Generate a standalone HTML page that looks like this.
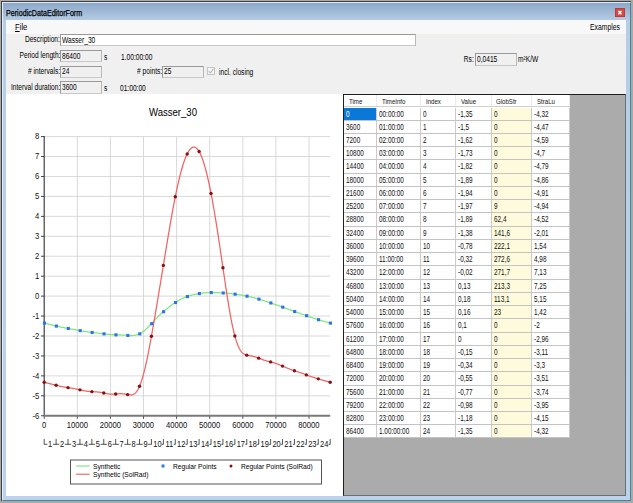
<!DOCTYPE html>
<html><head><meta charset="utf-8">
<style>
*{box-sizing:border-box}
html,body{margin:0;padding:0}
body{width:633px;height:503px;position:relative;overflow:hidden;background:#a9a9a9;font-family:"Liberation Sans",sans-serif;color:#1a1a1a}
.abs{position:absolute}
.t{position:absolute;font-size:8.5px;white-space:nowrap;line-height:1;color:#000;transform:scaleX(0.78);transform-origin:0 0}
#frame{left:1px;top:1px;width:630px;height:500px;background:#404040}
#blue{left:2px;top:2px;width:629px;height:499px;background:linear-gradient(#8eaacb 1px,#b6cde6 18px,#bcd2ec);border-top:1px solid #dce8f4;border-left:1px solid #e0ecf8;border-right:1px solid #3a8a9c;border-bottom:1px solid #3a8a9c}
#title{left:6px;top:8.7px;font-size:8.5px;transform:scaleX(0.84);color:#000;-webkit-text-stroke:0.25px #000}
#close{left:615px;top:8px;width:9.6px;height:9.3px;background:#d24c4a;border:1px solid #c43834}
#close span{position:absolute;left:2px;top:-1px;color:#fff;font-size:8px;font-weight:bold;line-height:9px}
#menu{left:6px;top:20px;width:620px;height:14px;background:#f8f8f8}
#panel{left:6px;top:34px;width:620px;height:60px;background:#f0f0f0}
.tb{position:absolute;border:1px solid #9a9a9a;border-bottom-color:#c8c8c8;border-right-color:#b8b8b8;background:#f0f0f0}
#chart{left:6px;top:94px;width:337px;height:402px;background:#fff}
#gridbg{left:343px;top:94px;width:283px;height:402px;background:#ababab;border-left:1px solid #1e1e1e;border-top:1px solid #1e1e1e;border-right:1px solid #66717c;border-bottom:1px solid #66717c}
#grid{left:344px;top:95px;width:226px;height:342px;background:#fff}
.row{position:absolute;left:0;width:226px;height:13.24px;border-bottom:1px solid #c4c4c4}
.c{position:absolute;top:0;height:100%;border-right:1px solid #cbcbcb;font-size:8.2px;line-height:13.6px;padding-left:1.6px;white-space:nowrap;color:#111}
.yl{background:#fefbdc}
.tx{display:inline-block;transform:scaleX(0.78);transform-origin:0 0}
.sel{background:#0a78d6;color:#fff}
.hdr{position:absolute;left:0;top:0;width:226px;height:12px;border-bottom:1px solid #d0d0d0}
.h{position:absolute;top:0;height:100%;border-right:1px solid #ebebeb;font-size:7.8px;line-height:14.4px;white-space:nowrap;color:#111}
.lg{font-size:8px;transform:scaleX(0.83)}
svg text{font-family:"Liberation Sans",sans-serif}
.ax{font-size:8.5px;fill:#111}
.cl{font-size:8.8px;fill:#111}
</style></head><body>
<div class="abs" id="frame"></div>
<div class="abs" id="blue"></div>
<div class="t" id="title">PeriodicDataEditorForm</div>
<div class="abs" id="close"></div><svg class="abs" style="left:612px;top:5px" width="16" height="16"><path d="M6.4,6 L9.4,9.2 M9.4,6 L6.4,9.2" stroke="#fff" stroke-width="1.4"/></svg>
<div class="abs" id="menu"></div>
<div class="t" style="left:15px;top:23px;font-size:8.5px;transform:scaleX(0.9)"><u>F</u>ile</div>
<div class="t" style="left:589.5px;top:23px;font-size:8.5px;transform:scaleX(0.8)">Examples</div>
<div class="abs" id="panel"></div>
<div class="tb" style="left:60px;top:34px;width:356px;height:12px;background:#fff"></div>
<div class="tb" style="left:60px;top:50px;width:42px;height:12px"></div>
<div class="tb" style="left:60px;top:65.5px;width:42px;height:12px"></div>
<div class="tb" style="left:162px;top:65.5px;width:41.5px;height:12px"></div>
<div class="abs" style="left:207px;top:67px;width:8px;height:8px;border:1px solid #c6c6c6;background:#f4f4f4"></div>
<svg class="abs" style="left:207px;top:67px" width="8" height="8"><polyline points="1.6,4.2 3.3,6 6.6,1.8" fill="none" stroke="#bcbcbc" stroke-width="1.1"/></svg>
<div class="tb" style="left:60px;top:81px;width:42px;height:12.5px"></div>
<div class="tb" style="left:475px;top:52.5px;width:42px;height:13px"></div>
<div class="t" style="right:573.20px;top:35.30px;transform-origin:100% 0">Description:</div>
<div class="t" style="right:572.80px;top:51.20px;transform-origin:100% 0">Period length:</div>
<div class="t" style="right:573.00px;top:67.20px;transform-origin:100% 0"># intervals:</div>
<div class="t" style="right:471.20px;top:66.90px;transform-origin:100% 0"># points:</div>
<div class="t" style="right:573.00px;top:82.70px;transform-origin:100% 0">Interval duration:</div>
<div class="t" style="right:159.10px;top:55.10px;transform-origin:100% 0">Rs:</div>
<div class="t" style="left:62.00px;top:35.90px">Wasser_30</div>
<div class="t" style="left:62.00px;top:51.60px">86400</div>
<div class="t" style="left:103.60px;top:52.70px">s</div>
<div class="t" style="left:121.20px;top:52.80px">1.00:00:00</div>
<div class="t" style="left:61.60px;top:67.40px">24</div>
<div class="t" style="left:163.60px;top:67.40px">25</div>
<div class="t" style="left:218.50px;top:68.20px">incl. closing</div>
<div class="t" style="left:61.60px;top:83.30px">3600</div>
<div class="t" style="left:103.60px;top:83.70px">s</div>
<div class="t" style="left:120.40px;top:84.00px">01:00:00</div>
<div class="t" style="left:476.80px;top:55.10px">0,0415</div>
<div class="t" style="left:518.00px;top:55.10px">m&#178;K/W</div>
<div class="abs" id="chart"></div>
<div class="t" style="left:148.6px;top:107.5px;font-size:10px;transform:scaleX(0.955)">Wasser_30</div>
<svg class="abs" style="left:0;top:0" width="633" height="503" viewBox="0 0 633 503">
<line x1="41" y1="415.76" x2="44.2" y2="415.76" stroke="#444" stroke-width="1"/>
<text transform="translate(39.2,418.56) scale(0.9,1)" text-anchor="end" class="ax">-6</text>
<line x1="44.2" y1="395.82" x2="330.2" y2="395.82" stroke="#d9d9d9" stroke-width="1"/>
<line x1="41" y1="395.82" x2="44.2" y2="395.82" stroke="#444" stroke-width="1"/>
<text transform="translate(39.2,398.62) scale(0.9,1)" text-anchor="end" class="ax">-5</text>
<line x1="44.2" y1="375.88" x2="330.2" y2="375.88" stroke="#d9d9d9" stroke-width="1"/>
<line x1="41" y1="375.88" x2="44.2" y2="375.88" stroke="#444" stroke-width="1"/>
<text transform="translate(39.2,378.68) scale(0.9,1)" text-anchor="end" class="ax">-4</text>
<line x1="44.2" y1="355.94" x2="330.2" y2="355.94" stroke="#d9d9d9" stroke-width="1"/>
<line x1="41" y1="355.94" x2="44.2" y2="355.94" stroke="#444" stroke-width="1"/>
<text transform="translate(39.2,358.74) scale(0.9,1)" text-anchor="end" class="ax">-3</text>
<line x1="44.2" y1="336.00" x2="330.2" y2="336.00" stroke="#d9d9d9" stroke-width="1"/>
<line x1="41" y1="336.00" x2="44.2" y2="336.00" stroke="#444" stroke-width="1"/>
<text transform="translate(39.2,338.80) scale(0.9,1)" text-anchor="end" class="ax">-2</text>
<line x1="44.2" y1="316.06" x2="330.2" y2="316.06" stroke="#d9d9d9" stroke-width="1"/>
<line x1="41" y1="316.06" x2="44.2" y2="316.06" stroke="#444" stroke-width="1"/>
<text transform="translate(39.2,318.86) scale(0.9,1)" text-anchor="end" class="ax">-1</text>
<line x1="44.2" y1="296.12" x2="330.2" y2="296.12" stroke="#d9d9d9" stroke-width="1"/>
<line x1="41" y1="296.12" x2="44.2" y2="296.12" stroke="#444" stroke-width="1"/>
<text transform="translate(39.2,298.92) scale(0.9,1)" text-anchor="end" class="ax">0</text>
<line x1="44.2" y1="276.18" x2="330.2" y2="276.18" stroke="#d9d9d9" stroke-width="1"/>
<line x1="41" y1="276.18" x2="44.2" y2="276.18" stroke="#444" stroke-width="1"/>
<text transform="translate(39.2,278.98) scale(0.9,1)" text-anchor="end" class="ax">1</text>
<line x1="44.2" y1="256.24" x2="330.2" y2="256.24" stroke="#d9d9d9" stroke-width="1"/>
<line x1="41" y1="256.24" x2="44.2" y2="256.24" stroke="#444" stroke-width="1"/>
<text transform="translate(39.2,259.04) scale(0.9,1)" text-anchor="end" class="ax">2</text>
<line x1="44.2" y1="236.30" x2="330.2" y2="236.30" stroke="#d9d9d9" stroke-width="1"/>
<line x1="41" y1="236.30" x2="44.2" y2="236.30" stroke="#444" stroke-width="1"/>
<text transform="translate(39.2,239.10) scale(0.9,1)" text-anchor="end" class="ax">3</text>
<line x1="44.2" y1="216.36" x2="330.2" y2="216.36" stroke="#d9d9d9" stroke-width="1"/>
<line x1="41" y1="216.36" x2="44.2" y2="216.36" stroke="#444" stroke-width="1"/>
<text transform="translate(39.2,219.16) scale(0.9,1)" text-anchor="end" class="ax">4</text>
<line x1="44.2" y1="196.42" x2="330.2" y2="196.42" stroke="#d9d9d9" stroke-width="1"/>
<line x1="41" y1="196.42" x2="44.2" y2="196.42" stroke="#444" stroke-width="1"/>
<text transform="translate(39.2,199.22) scale(0.9,1)" text-anchor="end" class="ax">5</text>
<line x1="44.2" y1="176.48" x2="330.2" y2="176.48" stroke="#d9d9d9" stroke-width="1"/>
<line x1="41" y1="176.48" x2="44.2" y2="176.48" stroke="#444" stroke-width="1"/>
<text transform="translate(39.2,179.28) scale(0.9,1)" text-anchor="end" class="ax">6</text>
<line x1="44.2" y1="156.54" x2="330.2" y2="156.54" stroke="#d9d9d9" stroke-width="1"/>
<line x1="41" y1="156.54" x2="44.2" y2="156.54" stroke="#444" stroke-width="1"/>
<text transform="translate(39.2,159.34) scale(0.9,1)" text-anchor="end" class="ax">7</text>
<line x1="44.2" y1="136.60" x2="330.2" y2="136.60" stroke="#d9d9d9" stroke-width="1"/>
<line x1="41" y1="136.60" x2="44.2" y2="136.60" stroke="#444" stroke-width="1"/>
<text transform="translate(39.2,139.40) scale(0.9,1)" text-anchor="end" class="ax">8</text>
<line x1="44.20" y1="415.8" x2="44.20" y2="418.8" stroke="#444" stroke-width="1"/>
<text transform="translate(44.20,428.2) scale(0.9,1)" text-anchor="middle" class="ax">0</text>
<line x1="77.30" y1="136.6" x2="77.30" y2="415.8" stroke="#d9d9d9" stroke-width="1"/>
<line x1="77.30" y1="415.8" x2="77.30" y2="418.8" stroke="#444" stroke-width="1"/>
<text transform="translate(77.30,428.2) scale(0.9,1)" text-anchor="middle" class="ax">10000</text>
<line x1="110.40" y1="136.6" x2="110.40" y2="415.8" stroke="#d9d9d9" stroke-width="1"/>
<line x1="110.40" y1="415.8" x2="110.40" y2="418.8" stroke="#444" stroke-width="1"/>
<text transform="translate(110.40,428.2) scale(0.9,1)" text-anchor="middle" class="ax">20000</text>
<line x1="143.50" y1="136.6" x2="143.50" y2="415.8" stroke="#d9d9d9" stroke-width="1"/>
<line x1="143.50" y1="415.8" x2="143.50" y2="418.8" stroke="#444" stroke-width="1"/>
<text transform="translate(143.50,428.2) scale(0.9,1)" text-anchor="middle" class="ax">30000</text>
<line x1="176.60" y1="136.6" x2="176.60" y2="415.8" stroke="#d9d9d9" stroke-width="1"/>
<line x1="176.60" y1="415.8" x2="176.60" y2="418.8" stroke="#444" stroke-width="1"/>
<text transform="translate(176.60,428.2) scale(0.9,1)" text-anchor="middle" class="ax">40000</text>
<line x1="209.70" y1="136.6" x2="209.70" y2="415.8" stroke="#d9d9d9" stroke-width="1"/>
<line x1="209.70" y1="415.8" x2="209.70" y2="418.8" stroke="#444" stroke-width="1"/>
<text transform="translate(209.70,428.2) scale(0.9,1)" text-anchor="middle" class="ax">50000</text>
<line x1="242.80" y1="136.6" x2="242.80" y2="415.8" stroke="#d9d9d9" stroke-width="1"/>
<line x1="242.80" y1="415.8" x2="242.80" y2="418.8" stroke="#444" stroke-width="1"/>
<text transform="translate(242.80,428.2) scale(0.9,1)" text-anchor="middle" class="ax">60000</text>
<line x1="275.90" y1="136.6" x2="275.90" y2="415.8" stroke="#d9d9d9" stroke-width="1"/>
<line x1="275.90" y1="415.8" x2="275.90" y2="418.8" stroke="#444" stroke-width="1"/>
<text transform="translate(275.90,428.2) scale(0.9,1)" text-anchor="middle" class="ax">70000</text>
<line x1="309.00" y1="136.6" x2="309.00" y2="415.8" stroke="#d9d9d9" stroke-width="1"/>
<line x1="309.00" y1="415.8" x2="309.00" y2="418.8" stroke="#444" stroke-width="1"/>
<text transform="translate(309.00,428.2) scale(0.9,1)" text-anchor="middle" class="ax">80000</text>
<line x1="44.2" y1="136.1" x2="44.2" y2="415.8" stroke="#404040" stroke-width="1.2"/>
<line x1="44.2" y1="415.76" x2="330.2" y2="415.76" stroke="#7a7a7a" stroke-width="2"/>
<line x1="44.20" y1="439" x2="44.20" y2="444.5" stroke="#2a2a2a" stroke-width="0.8"/>
<line x1="56.12" y1="439" x2="56.12" y2="444.5" stroke="#2a2a2a" stroke-width="0.8"/>
<line x1="68.03" y1="439" x2="68.03" y2="444.5" stroke="#2a2a2a" stroke-width="0.8"/>
<line x1="79.95" y1="439" x2="79.95" y2="444.5" stroke="#2a2a2a" stroke-width="0.8"/>
<line x1="91.86" y1="439" x2="91.86" y2="444.5" stroke="#2a2a2a" stroke-width="0.8"/>
<line x1="103.78" y1="439" x2="103.78" y2="444.5" stroke="#2a2a2a" stroke-width="0.8"/>
<line x1="115.70" y1="439" x2="115.70" y2="444.5" stroke="#2a2a2a" stroke-width="0.8"/>
<line x1="127.61" y1="439" x2="127.61" y2="444.5" stroke="#2a2a2a" stroke-width="0.8"/>
<line x1="139.53" y1="439" x2="139.53" y2="444.5" stroke="#2a2a2a" stroke-width="0.8"/>
<line x1="151.44" y1="439" x2="151.44" y2="444.5" stroke="#2a2a2a" stroke-width="0.8"/>
<line x1="163.36" y1="439" x2="163.36" y2="444.5" stroke="#2a2a2a" stroke-width="0.8"/>
<line x1="175.28" y1="439" x2="175.28" y2="444.5" stroke="#2a2a2a" stroke-width="0.8"/>
<line x1="187.19" y1="439" x2="187.19" y2="444.5" stroke="#2a2a2a" stroke-width="0.8"/>
<line x1="199.11" y1="439" x2="199.11" y2="444.5" stroke="#2a2a2a" stroke-width="0.8"/>
<line x1="211.02" y1="439" x2="211.02" y2="444.5" stroke="#2a2a2a" stroke-width="0.8"/>
<line x1="222.94" y1="439" x2="222.94" y2="444.5" stroke="#2a2a2a" stroke-width="0.8"/>
<line x1="234.86" y1="439" x2="234.86" y2="444.5" stroke="#2a2a2a" stroke-width="0.8"/>
<line x1="246.77" y1="439" x2="246.77" y2="444.5" stroke="#2a2a2a" stroke-width="0.8"/>
<line x1="258.69" y1="439" x2="258.69" y2="444.5" stroke="#2a2a2a" stroke-width="0.8"/>
<line x1="270.60" y1="439" x2="270.60" y2="444.5" stroke="#2a2a2a" stroke-width="0.8"/>
<line x1="282.52" y1="439" x2="282.52" y2="444.5" stroke="#2a2a2a" stroke-width="0.8"/>
<line x1="294.44" y1="439" x2="294.44" y2="444.5" stroke="#2a2a2a" stroke-width="0.8"/>
<line x1="306.35" y1="439" x2="306.35" y2="444.5" stroke="#2a2a2a" stroke-width="0.8"/>
<line x1="318.27" y1="439" x2="318.27" y2="444.5" stroke="#2a2a2a" stroke-width="0.8"/>
<line x1="330.18" y1="439" x2="330.18" y2="444.5" stroke="#2a2a2a" stroke-width="0.8"/>
<line x1="44.20" y1="444.3" x2="47.40" y2="444.3" stroke="#2a2a2a" stroke-width="0.8"/>
<line x1="52.92" y1="444.3" x2="56.12" y2="444.3" stroke="#2a2a2a" stroke-width="0.8"/>
<text transform="translate(50.16,447) scale(0.85,1)" text-anchor="middle" class="cl">1</text>
<line x1="56.12" y1="444.3" x2="59.32" y2="444.3" stroke="#2a2a2a" stroke-width="0.8"/>
<line x1="64.83" y1="444.3" x2="68.03" y2="444.3" stroke="#2a2a2a" stroke-width="0.8"/>
<text transform="translate(62.07,447) scale(0.85,1)" text-anchor="middle" class="cl">2</text>
<line x1="68.03" y1="444.3" x2="71.23" y2="444.3" stroke="#2a2a2a" stroke-width="0.8"/>
<line x1="76.75" y1="444.3" x2="79.95" y2="444.3" stroke="#2a2a2a" stroke-width="0.8"/>
<text transform="translate(73.99,447) scale(0.85,1)" text-anchor="middle" class="cl">3</text>
<line x1="79.95" y1="444.3" x2="83.15" y2="444.3" stroke="#2a2a2a" stroke-width="0.8"/>
<line x1="88.66" y1="444.3" x2="91.86" y2="444.3" stroke="#2a2a2a" stroke-width="0.8"/>
<text transform="translate(85.91,447) scale(0.85,1)" text-anchor="middle" class="cl">4</text>
<line x1="91.86" y1="444.3" x2="95.06" y2="444.3" stroke="#2a2a2a" stroke-width="0.8"/>
<line x1="100.58" y1="444.3" x2="103.78" y2="444.3" stroke="#2a2a2a" stroke-width="0.8"/>
<text transform="translate(97.82,447) scale(0.85,1)" text-anchor="middle" class="cl">5</text>
<line x1="103.78" y1="444.3" x2="106.98" y2="444.3" stroke="#2a2a2a" stroke-width="0.8"/>
<line x1="112.50" y1="444.3" x2="115.70" y2="444.3" stroke="#2a2a2a" stroke-width="0.8"/>
<text transform="translate(109.74,447) scale(0.85,1)" text-anchor="middle" class="cl">6</text>
<line x1="115.70" y1="444.3" x2="118.90" y2="444.3" stroke="#2a2a2a" stroke-width="0.8"/>
<line x1="124.41" y1="444.3" x2="127.61" y2="444.3" stroke="#2a2a2a" stroke-width="0.8"/>
<text transform="translate(121.65,447) scale(0.85,1)" text-anchor="middle" class="cl">7</text>
<line x1="127.61" y1="444.3" x2="130.81" y2="444.3" stroke="#2a2a2a" stroke-width="0.8"/>
<line x1="136.33" y1="444.3" x2="139.53" y2="444.3" stroke="#2a2a2a" stroke-width="0.8"/>
<text transform="translate(133.57,447) scale(0.85,1)" text-anchor="middle" class="cl">8</text>
<line x1="139.53" y1="444.3" x2="142.73" y2="444.3" stroke="#2a2a2a" stroke-width="0.8"/>
<line x1="148.24" y1="444.3" x2="151.44" y2="444.3" stroke="#2a2a2a" stroke-width="0.8"/>
<text transform="translate(145.49,447) scale(0.85,1)" text-anchor="middle" class="cl">9</text>
<line x1="161.76" y1="444.3" x2="163.36" y2="444.3" stroke="#2a2a2a" stroke-width="0.8"/>
<text transform="translate(157.40,447) scale(0.85,1)" text-anchor="middle" class="cl">10</text>
<line x1="173.68" y1="444.3" x2="175.28" y2="444.3" stroke="#2a2a2a" stroke-width="0.8"/>
<text transform="translate(169.32,447) scale(0.85,1)" text-anchor="middle" class="cl">11</text>
<line x1="185.59" y1="444.3" x2="187.19" y2="444.3" stroke="#2a2a2a" stroke-width="0.8"/>
<text transform="translate(181.23,447) scale(0.85,1)" text-anchor="middle" class="cl">12</text>
<line x1="197.51" y1="444.3" x2="199.11" y2="444.3" stroke="#2a2a2a" stroke-width="0.8"/>
<text transform="translate(193.15,447) scale(0.85,1)" text-anchor="middle" class="cl">13</text>
<line x1="209.42" y1="444.3" x2="211.02" y2="444.3" stroke="#2a2a2a" stroke-width="0.8"/>
<text transform="translate(205.07,447) scale(0.85,1)" text-anchor="middle" class="cl">14</text>
<line x1="221.34" y1="444.3" x2="222.94" y2="444.3" stroke="#2a2a2a" stroke-width="0.8"/>
<text transform="translate(216.98,447) scale(0.85,1)" text-anchor="middle" class="cl">15</text>
<line x1="233.26" y1="444.3" x2="234.86" y2="444.3" stroke="#2a2a2a" stroke-width="0.8"/>
<text transform="translate(228.90,447) scale(0.85,1)" text-anchor="middle" class="cl">16</text>
<line x1="245.17" y1="444.3" x2="246.77" y2="444.3" stroke="#2a2a2a" stroke-width="0.8"/>
<text transform="translate(240.81,447) scale(0.85,1)" text-anchor="middle" class="cl">17</text>
<line x1="257.09" y1="444.3" x2="258.69" y2="444.3" stroke="#2a2a2a" stroke-width="0.8"/>
<text transform="translate(252.73,447) scale(0.85,1)" text-anchor="middle" class="cl">18</text>
<line x1="269.00" y1="444.3" x2="270.60" y2="444.3" stroke="#2a2a2a" stroke-width="0.8"/>
<text transform="translate(264.65,447) scale(0.85,1)" text-anchor="middle" class="cl">19</text>
<line x1="280.92" y1="444.3" x2="282.52" y2="444.3" stroke="#2a2a2a" stroke-width="0.8"/>
<text transform="translate(276.56,447) scale(0.85,1)" text-anchor="middle" class="cl">20</text>
<line x1="292.84" y1="444.3" x2="294.44" y2="444.3" stroke="#2a2a2a" stroke-width="0.8"/>
<text transform="translate(288.48,447) scale(0.85,1)" text-anchor="middle" class="cl">21</text>
<line x1="304.75" y1="444.3" x2="306.35" y2="444.3" stroke="#2a2a2a" stroke-width="0.8"/>
<text transform="translate(300.39,447) scale(0.85,1)" text-anchor="middle" class="cl">22</text>
<line x1="316.67" y1="444.3" x2="318.27" y2="444.3" stroke="#2a2a2a" stroke-width="0.8"/>
<text transform="translate(312.31,447) scale(0.85,1)" text-anchor="middle" class="cl">23</text>
<line x1="328.58" y1="444.3" x2="330.18" y2="444.3" stroke="#2a2a2a" stroke-width="0.8"/>
<text transform="translate(324.23,447) scale(0.85,1)" text-anchor="middle" class="cl">24</text>
<path d="M44.20,323.04 L44.50,323.12 L44.80,323.19 L45.09,323.27 L45.39,323.35 L45.69,323.43 L45.99,323.50 L46.29,323.58 L46.58,323.66 L46.88,323.73 L47.18,323.81 L47.48,323.89 L47.77,323.96 L48.07,324.04 L48.37,324.11 L48.67,324.19 L48.97,324.27 L49.26,324.34 L49.56,324.42 L49.86,324.49 L50.16,324.57 L50.46,324.64 L50.75,324.72 L51.05,324.79 L51.35,324.87 L51.65,324.94 L51.95,325.02 L52.24,325.09 L52.54,325.17 L52.84,325.24 L53.14,325.31 L53.43,325.39 L53.73,325.46 L54.03,325.53 L54.33,325.60 L54.63,325.68 L54.92,325.75 L55.22,325.82 L55.52,325.89 L55.82,325.96 L56.12,326.03 L56.41,326.10 L56.71,326.17 L57.01,326.24 L57.31,326.31 L57.61,326.37 L57.90,326.44 L58.20,326.51 L58.50,326.57 L58.80,326.64 L59.09,326.70 L59.39,326.77 L59.69,326.83 L59.99,326.89 L60.29,326.96 L60.58,327.02 L60.88,327.08 L61.18,327.14 L61.48,327.20 L61.78,327.26 L62.07,327.32 L62.37,327.38 L62.67,327.44 L62.97,327.50 L63.27,327.55 L63.56,327.61 L63.86,327.67 L64.16,327.72 L64.46,327.78 L64.76,327.83 L65.05,327.89 L65.35,327.94 L65.65,328.00 L65.95,328.05 L66.24,328.10 L66.54,328.16 L66.84,328.21 L67.14,328.26 L67.44,328.32 L67.73,328.37 L68.03,328.42 L68.33,328.48 L68.63,328.53 L68.93,328.58 L69.22,328.63 L69.52,328.69 L69.82,328.74 L70.12,328.79 L70.42,328.84 L70.71,328.90 L71.01,328.95 L71.31,329.00 L71.61,329.06 L71.90,329.11 L72.20,329.16 L72.50,329.22 L72.80,329.27 L73.10,329.33 L73.39,329.38 L73.69,329.44 L73.99,329.49 L74.29,329.55 L74.59,329.60 L74.88,329.66 L75.18,329.71 L75.48,329.77 L75.78,329.83 L76.08,329.88 L76.37,329.94 L76.67,330.00 L76.97,330.05 L77.27,330.11 L77.56,330.17 L77.86,330.22 L78.16,330.28 L78.46,330.34 L78.76,330.39 L79.05,330.45 L79.35,330.50 L79.65,330.56 L79.95,330.62 L80.25,330.67 L80.54,330.73 L80.84,330.78 L81.14,330.84 L81.44,330.89 L81.74,330.94 L82.03,331.00 L82.33,331.05 L82.63,331.10 L82.93,331.16 L83.22,331.21 L83.52,331.26 L83.82,331.31 L84.12,331.36 L84.42,331.41 L84.71,331.45 L85.01,331.50 L85.31,331.55 L85.61,331.59 L85.91,331.64 L86.20,331.68 L86.50,331.73 L86.80,331.77 L87.10,331.81 L87.40,331.86 L87.69,331.90 L87.99,331.94 L88.29,331.98 L88.59,332.02 L88.89,332.05 L89.18,332.09 L89.48,332.13 L89.78,332.17 L90.08,332.20 L90.37,332.24 L90.67,332.27 L90.97,332.31 L91.27,332.34 L91.57,332.38 L91.86,332.41 L92.16,332.44 L92.46,332.48 L92.76,332.51 L93.06,332.54 L93.35,332.58 L93.65,332.61 L93.95,332.64 L94.25,332.67 L94.55,332.71 L94.84,332.74 L95.14,332.77 L95.44,332.80 L95.74,332.84 L96.03,332.87 L96.33,332.90 L96.63,332.94 L96.93,332.97 L97.23,333.00 L97.52,333.04 L97.82,333.07 L98.12,333.11 L98.42,333.14 L98.72,333.18 L99.01,333.21 L99.31,333.25 L99.61,333.28 L99.91,333.32 L100.21,333.36 L100.50,333.39 L100.80,333.43 L101.10,333.47 L101.40,333.51 L101.69,333.54 L101.99,333.58 L102.29,333.62 L102.59,333.66 L102.89,333.69 L103.18,333.73 L103.48,333.77 L103.78,333.81 L104.08,333.84 L104.38,333.88 L104.67,333.92 L104.97,333.95 L105.27,333.99 L105.57,334.03 L105.87,334.06 L106.16,334.10 L106.46,334.13 L106.76,334.17 L107.06,334.20 L107.35,334.23 L107.65,334.26 L107.95,334.29 L108.25,334.32 L108.55,334.35 L108.84,334.38 L109.14,334.41 L109.44,334.44 L109.74,334.46 L110.04,334.49 L110.33,334.51 L110.63,334.54 L110.93,334.56 L111.23,334.58 L111.53,334.60 L111.82,334.62 L112.12,334.64 L112.42,334.66 L112.72,334.67 L113.01,334.69 L113.31,334.70 L113.61,334.72 L113.91,334.73 L114.21,334.75 L114.50,334.76 L114.80,334.77 L115.10,334.78 L115.40,334.79 L115.70,334.80 L115.99,334.81 L116.29,334.82 L116.59,334.83 L116.89,334.84 L117.19,334.85 L117.48,334.86 L117.78,334.87 L118.08,334.88 L118.38,334.89 L118.67,334.90 L118.97,334.91 L119.27,334.92 L119.57,334.93 L119.87,334.94 L120.16,334.95 L120.46,334.96 L120.76,334.97 L121.06,334.99 L121.36,335.00 L121.65,335.02 L121.95,335.03 L122.25,335.05 L122.55,335.06 L122.85,335.08 L123.14,335.10 L123.44,335.11 L123.74,335.13 L124.04,335.15 L124.34,335.17 L124.63,335.19 L124.93,335.21 L125.23,335.23 L125.53,335.25 L125.82,335.28 L126.12,335.30 L126.42,335.32 L126.72,335.34 L127.02,335.36 L127.31,335.38 L127.61,335.40 L127.91,335.42 L128.21,335.44 L128.51,335.46 L128.80,335.47 L129.10,335.49 L129.40,335.50 L129.70,335.52 L130.00,335.53 L130.29,335.54 L130.59,335.54 L130.89,335.55 L131.19,335.55 L131.48,335.55 L131.78,335.54 L132.08,335.54 L132.38,335.53 L132.68,335.51 L132.97,335.49 L133.27,335.47 L133.57,335.45 L133.87,335.42 L134.17,335.38 L134.46,335.34 L134.76,335.30 L135.06,335.25 L135.36,335.19 L135.66,335.13 L135.95,335.07 L136.25,335.00 L136.55,334.92 L136.85,334.84 L137.14,334.75 L137.44,334.65 L137.74,334.55 L138.04,334.44 L138.34,334.33 L138.63,334.21 L138.93,334.08 L139.23,333.95 L139.53,333.81 L139.83,333.66 L140.12,333.50 L140.42,333.34 L140.72,333.18 L141.02,333.00 L141.32,332.82 L141.61,332.63 L141.91,332.44 L142.21,332.24 L142.51,332.03 L142.80,331.82 L143.10,331.60 L143.40,331.38 L143.70,331.14 L144.00,330.91 L144.29,330.67 L144.59,330.42 L144.89,330.16 L145.19,329.91 L145.49,329.64 L145.78,329.37 L146.08,329.10 L146.38,328.82 L146.68,328.54 L146.98,328.26 L147.27,327.97 L147.57,327.67 L147.87,327.38 L148.17,327.08 L148.47,326.78 L148.76,326.47 L149.06,326.16 L149.36,325.85 L149.66,325.54 L149.95,325.23 L150.25,324.91 L150.55,324.59 L150.85,324.28 L151.15,323.96 L151.44,323.64 L151.74,323.32 L152.04,323.00 L152.34,322.67 L152.64,322.35 L152.93,322.03 L153.23,321.71 L153.53,321.39 L153.83,321.07 L154.13,320.75 L154.42,320.43 L154.72,320.12 L155.02,319.80 L155.32,319.48 L155.61,319.17 L155.91,318.86 L156.21,318.55 L156.51,318.24 L156.81,317.93 L157.10,317.63 L157.40,317.32 L157.70,317.02 L158.00,316.72 L158.30,316.42 L158.59,316.13 L158.89,315.83 L159.19,315.54 L159.49,315.25 L159.79,314.96 L160.08,314.68 L160.38,314.40 L160.68,314.11 L160.98,313.83 L161.27,313.56 L161.57,313.28 L161.87,313.01 L162.17,312.74 L162.47,312.47 L162.76,312.20 L163.06,311.94 L163.36,311.67 L163.66,311.41 L163.96,311.15 L164.25,310.89 L164.55,310.64 L164.85,310.38 L165.15,310.13 L165.45,309.88 L165.74,309.63 L166.04,309.38 L166.34,309.14 L166.64,308.89 L166.93,308.65 L167.23,308.41 L167.53,308.17 L167.83,307.93 L168.13,307.70 L168.42,307.46 L168.72,307.23 L169.02,307.00 L169.32,306.77 L169.62,306.54 L169.91,306.31 L170.21,306.08 L170.51,305.86 L170.81,305.64 L171.11,305.42 L171.40,305.20 L171.70,304.98 L172.00,304.76 L172.30,304.55 L172.59,304.33 L172.89,304.12 L173.19,303.91 L173.49,303.71 L173.79,303.50 L174.08,303.30 L174.38,303.09 L174.68,302.89 L174.98,302.70 L175.28,302.50 L175.57,302.31 L175.87,302.11 L176.17,301.92 L176.47,301.74 L176.77,301.55 L177.06,301.37 L177.36,301.19 L177.66,301.01 L177.96,300.83 L178.25,300.66 L178.55,300.49 L178.85,300.32 L179.15,300.15 L179.45,299.98 L179.74,299.82 L180.04,299.66 L180.34,299.50 L180.64,299.35 L180.94,299.19 L181.23,299.04 L181.53,298.90 L181.83,298.75 L182.13,298.61 L182.43,298.47 L182.72,298.33 L183.02,298.19 L183.32,298.06 L183.62,297.93 L183.92,297.80 L184.21,297.67 L184.51,297.55 L184.81,297.42 L185.11,297.30 L185.40,297.18 L185.70,297.07 L186.00,296.95 L186.30,296.84 L186.60,296.73 L186.89,296.62 L187.19,296.52 L187.49,296.41 L187.79,296.31 L188.09,296.21 L188.38,296.11 L188.68,296.02 L188.98,295.92 L189.28,295.83 L189.58,295.74 L189.87,295.65 L190.17,295.56 L190.47,295.47 L190.77,295.39 L191.06,295.30 L191.36,295.22 L191.66,295.14 L191.96,295.06 L192.26,294.98 L192.55,294.90 L192.85,294.83 L193.15,294.75 L193.45,294.68 L193.75,294.61 L194.04,294.54 L194.34,294.47 L194.64,294.40 L194.94,294.34 L195.24,294.27 L195.53,294.21 L195.83,294.14 L196.13,294.08 L196.43,294.02 L196.72,293.96 L197.02,293.90 L197.32,293.85 L197.62,293.79 L197.92,293.73 L198.21,293.68 L198.51,293.63 L198.81,293.58 L199.11,293.53 L199.41,293.48 L199.70,293.43 L200.00,293.39 L200.30,293.34 L200.60,293.30 L200.90,293.25 L201.19,293.21 L201.49,293.17 L201.79,293.13 L202.09,293.10 L202.38,293.06 L202.68,293.02 L202.98,292.99 L203.28,292.96 L203.58,292.93 L203.87,292.90 L204.17,292.87 L204.47,292.84 L204.77,292.81 L205.07,292.79 L205.36,292.77 L205.66,292.74 L205.96,292.72 L206.26,292.70 L206.56,292.68 L206.85,292.67 L207.15,292.65 L207.45,292.63 L207.75,292.62 L208.05,292.61 L208.34,292.59 L208.64,292.58 L208.94,292.57 L209.24,292.56 L209.53,292.56 L209.83,292.55 L210.13,292.54 L210.43,292.54 L210.73,292.53 L211.02,292.53 L211.32,292.53 L211.62,292.53 L211.92,292.53 L212.22,292.53 L212.51,292.53 L212.81,292.53 L213.11,292.53 L213.41,292.54 L213.71,292.54 L214.00,292.54 L214.30,292.55 L214.60,292.56 L214.90,292.56 L215.19,292.57 L215.49,292.58 L215.79,292.58 L216.09,292.59 L216.39,292.60 L216.68,292.61 L216.98,292.62 L217.28,292.63 L217.58,292.65 L217.88,292.66 L218.17,292.67 L218.47,292.68 L218.77,292.70 L219.07,292.71 L219.37,292.72 L219.66,292.74 L219.96,292.75 L220.26,292.77 L220.56,292.79 L220.85,292.80 L221.15,292.82 L221.45,292.84 L221.75,292.85 L222.05,292.87 L222.34,292.89 L222.64,292.91 L222.94,292.93 L223.24,292.95 L223.54,292.97 L223.83,292.99 L224.13,293.01 L224.43,293.03 L224.73,293.06 L225.03,293.08 L225.32,293.10 L225.62,293.13 L225.92,293.15 L226.22,293.18 L226.51,293.20 L226.81,293.23 L227.11,293.25 L227.41,293.28 L227.71,293.31 L228.00,293.34 L228.30,293.37 L228.60,293.39 L228.90,293.42 L229.20,293.45 L229.49,293.48 L229.79,293.52 L230.09,293.55 L230.39,293.58 L230.69,293.61 L230.98,293.65 L231.28,293.68 L231.58,293.71 L231.88,293.75 L232.17,293.78 L232.47,293.82 L232.77,293.86 L233.07,293.89 L233.37,293.93 L233.66,293.97 L233.96,294.01 L234.26,294.05 L234.56,294.09 L234.86,294.13 L235.15,294.17 L235.45,294.21 L235.75,294.25 L236.05,294.29 L236.35,294.33 L236.64,294.38 L236.94,294.42 L237.24,294.46 L237.54,294.51 L237.83,294.55 L238.13,294.60 L238.43,294.64 L238.73,294.69 L239.03,294.73 L239.32,294.78 L239.62,294.83 L239.92,294.88 L240.22,294.92 L240.52,294.97 L240.81,295.02 L241.11,295.07 L241.41,295.12 L241.71,295.17 L242.01,295.22 L242.30,295.28 L242.60,295.33 L242.90,295.38 L243.20,295.43 L243.50,295.49 L243.79,295.54 L244.09,295.60 L244.39,295.65 L244.69,295.71 L244.98,295.77 L245.28,295.82 L245.58,295.88 L245.88,295.94 L246.18,296.00 L246.47,296.06 L246.77,296.12 L247.07,296.18 L247.37,296.24 L247.67,296.31 L247.96,296.37 L248.26,296.43 L248.56,296.50 L248.86,296.56 L249.16,296.63 L249.45,296.70 L249.75,296.76 L250.05,296.83 L250.35,296.90 L250.64,296.97 L250.94,297.04 L251.24,297.11 L251.54,297.18 L251.84,297.25 L252.13,297.33 L252.43,297.40 L252.73,297.48 L253.03,297.55 L253.33,297.63 L253.62,297.70 L253.92,297.78 L254.22,297.86 L254.52,297.94 L254.82,298.02 L255.11,298.10 L255.41,298.18 L255.71,298.26 L256.01,298.34 L256.30,298.43 L256.60,298.51 L256.90,298.59 L257.20,298.68 L257.50,298.76 L257.79,298.85 L258.09,298.94 L258.39,299.02 L258.69,299.11 L258.99,299.20 L259.28,299.29 L259.58,299.38 L259.88,299.47 L260.18,299.56 L260.48,299.65 L260.77,299.74 L261.07,299.83 L261.37,299.92 L261.67,300.01 L261.96,300.10 L262.26,300.20 L262.56,300.29 L262.86,300.38 L263.16,300.48 L263.45,300.57 L263.75,300.66 L264.05,300.76 L264.35,300.85 L264.65,300.95 L264.94,301.04 L265.24,301.14 L265.54,301.23 L265.84,301.33 L266.14,301.43 L266.43,301.52 L266.73,301.62 L267.03,301.72 L267.33,301.82 L267.62,301.91 L267.92,302.01 L268.22,302.11 L268.52,302.21 L268.82,302.30 L269.11,302.40 L269.41,302.50 L269.71,302.60 L270.01,302.70 L270.31,302.80 L270.60,302.90 L270.90,303.00 L271.20,303.10 L271.50,303.20 L271.80,303.30 L272.09,303.40 L272.39,303.50 L272.69,303.60 L272.99,303.71 L273.29,303.81 L273.58,303.91 L273.88,304.01 L274.18,304.11 L274.48,304.22 L274.77,304.32 L275.07,304.42 L275.37,304.53 L275.67,304.63 L275.97,304.73 L276.26,304.84 L276.56,304.94 L276.86,305.05 L277.16,305.15 L277.46,305.26 L277.75,305.36 L278.05,305.47 L278.35,305.58 L278.65,305.68 L278.95,305.79 L279.24,305.90 L279.54,306.00 L279.84,306.11 L280.14,306.22 L280.43,306.33 L280.73,306.43 L281.03,306.54 L281.33,306.65 L281.63,306.76 L281.92,306.87 L282.22,306.98 L282.52,307.09 L282.82,307.20 L283.12,307.31 L283.41,307.42 L283.71,307.53 L284.01,307.64 L284.31,307.75 L284.61,307.86 L284.90,307.97 L285.20,308.08 L285.50,308.19 L285.80,308.30 L286.09,308.41 L286.39,308.52 L286.69,308.63 L286.99,308.74 L287.29,308.85 L287.58,308.96 L287.88,309.07 L288.18,309.18 L288.48,309.29 L288.78,309.40 L289.07,309.51 L289.37,309.62 L289.67,309.73 L289.97,309.84 L290.27,309.95 L290.56,310.06 L290.86,310.17 L291.16,310.28 L291.46,310.39 L291.75,310.50 L292.05,310.61 L292.35,310.72 L292.65,310.82 L292.95,310.93 L293.24,311.04 L293.54,311.15 L293.84,311.26 L294.14,311.37 L294.44,311.47 L294.73,311.58 L295.03,311.69 L295.33,311.80 L295.63,311.90 L295.93,312.01 L296.22,312.12 L296.52,312.22 L296.82,312.33 L297.12,312.44 L297.42,312.54 L297.71,312.65 L298.01,312.75 L298.31,312.86 L298.61,312.96 L298.90,313.07 L299.20,313.17 L299.50,313.28 L299.80,313.38 L300.10,313.49 L300.39,313.59 L300.69,313.70 L300.99,313.80 L301.29,313.90 L301.59,314.01 L301.88,314.11 L302.18,314.22 L302.48,314.32 L302.78,314.42 L303.08,314.53 L303.37,314.63 L303.67,314.73 L303.97,314.84 L304.27,314.94 L304.56,315.04 L304.86,315.15 L305.16,315.25 L305.46,315.35 L305.76,315.46 L306.05,315.56 L306.35,315.66 L306.65,315.76 L306.95,315.87 L307.25,315.97 L307.54,316.07 L307.84,316.17 L308.14,316.28 L308.44,316.38 L308.74,316.48 L309.03,316.58 L309.33,316.69 L309.63,316.79 L309.93,316.89 L310.22,316.99 L310.52,317.09 L310.82,317.19 L311.12,317.30 L311.42,317.40 L311.71,317.50 L312.01,317.60 L312.31,317.70 L312.61,317.80 L312.91,317.90 L313.20,318.00 L313.50,318.10 L313.80,318.20 L314.10,318.30 L314.40,318.40 L314.69,318.49 L314.99,318.59 L315.29,318.69 L315.59,318.79 L315.88,318.89 L316.18,318.98 L316.48,319.08 L316.78,319.18 L317.08,319.27 L317.37,319.37 L317.67,319.46 L317.97,319.56 L318.27,319.65 L318.57,319.74 L318.86,319.84 L319.16,319.93 L319.46,320.02 L319.76,320.11 L320.06,320.20 L320.35,320.29 L320.65,320.38 L320.95,320.47 L321.25,320.56 L321.54,320.65 L321.84,320.74 L322.14,320.83 L322.44,320.91 L322.74,321.00 L323.03,321.09 L323.33,321.17 L323.63,321.26 L323.93,321.34 L324.23,321.43 L324.52,321.51 L324.82,321.60 L325.12,321.68 L325.42,321.76 L325.72,321.84 L326.01,321.93 L326.31,322.01 L326.61,322.09 L326.91,322.17 L327.20,322.25 L327.50,322.33 L327.80,322.41 L328.10,322.49 L328.40,322.57 L328.69,322.65 L328.99,322.73 L329.29,322.80 L329.59,322.88 L329.89,322.96 L330.18,323.04" fill="none" stroke="#7de87d" stroke-width="1.25"/>
<path d="M44.20,382.26 L44.50,382.34 L44.80,382.42 L45.09,382.49 L45.39,382.57 L45.69,382.65 L45.99,382.72 L46.29,382.80 L46.58,382.87 L46.88,382.95 L47.18,383.02 L47.48,383.10 L47.77,383.17 L48.07,383.25 L48.37,383.32 L48.67,383.40 L48.97,383.47 L49.26,383.54 L49.56,383.62 L49.86,383.69 L50.16,383.77 L50.46,383.84 L50.75,383.91 L51.05,383.99 L51.35,384.06 L51.65,384.14 L51.95,384.21 L52.24,384.29 L52.54,384.36 L52.84,384.43 L53.14,384.51 L53.43,384.58 L53.73,384.66 L54.03,384.73 L54.33,384.81 L54.63,384.88 L54.92,384.96 L55.22,385.03 L55.52,385.10 L55.82,385.18 L56.12,385.25 L56.41,385.33 L56.71,385.40 L57.01,385.47 L57.31,385.54 L57.61,385.62 L57.90,385.69 L58.20,385.76 L58.50,385.83 L58.80,385.90 L59.09,385.97 L59.39,386.04 L59.69,386.11 L59.99,386.17 L60.29,386.24 L60.58,386.30 L60.88,386.37 L61.18,386.43 L61.48,386.50 L61.78,386.56 L62.07,386.62 L62.37,386.68 L62.67,386.74 L62.97,386.80 L63.27,386.85 L63.56,386.91 L63.86,386.96 L64.16,387.02 L64.46,387.07 L64.76,387.12 L65.05,387.17 L65.35,387.22 L65.65,387.27 L65.95,387.32 L66.24,387.37 L66.54,387.42 L66.84,387.46 L67.14,387.51 L67.44,387.55 L67.73,387.60 L68.03,387.64 L68.33,387.69 L68.63,387.73 L68.93,387.78 L69.22,387.82 L69.52,387.87 L69.82,387.91 L70.12,387.95 L70.42,388.00 L70.71,388.04 L71.01,388.09 L71.31,388.13 L71.61,388.18 L71.90,388.23 L72.20,388.28 L72.50,388.32 L72.80,388.37 L73.10,388.42 L73.39,388.48 L73.69,388.53 L73.99,388.58 L74.29,388.64 L74.59,388.69 L74.88,388.75 L75.18,388.80 L75.48,388.86 L75.78,388.92 L76.08,388.98 L76.37,389.04 L76.67,389.11 L76.97,389.17 L77.27,389.23 L77.56,389.30 L77.86,389.36 L78.16,389.43 L78.46,389.50 L78.76,389.56 L79.05,389.63 L79.35,389.70 L79.65,389.77 L79.95,389.84 L80.25,389.91 L80.54,389.98 L80.84,390.04 L81.14,390.11 L81.44,390.18 L81.74,390.25 L82.03,390.31 L82.33,390.38 L82.63,390.44 L82.93,390.50 L83.22,390.57 L83.52,390.63 L83.82,390.69 L84.12,390.75 L84.42,390.80 L84.71,390.86 L85.01,390.91 L85.31,390.96 L85.61,391.01 L85.91,391.06 L86.20,391.11 L86.50,391.15 L86.80,391.19 L87.10,391.23 L87.40,391.27 L87.69,391.31 L87.99,391.34 L88.29,391.37 L88.59,391.40 L88.89,391.43 L89.18,391.46 L89.48,391.48 L89.78,391.50 L90.08,391.53 L90.37,391.55 L90.67,391.57 L90.97,391.58 L91.27,391.60 L91.57,391.62 L91.86,391.63 L92.16,391.65 L92.46,391.66 L92.76,391.68 L93.06,391.69 L93.35,391.70 L93.65,391.72 L93.95,391.73 L94.25,391.75 L94.55,391.76 L94.84,391.78 L95.14,391.79 L95.44,391.81 L95.74,391.83 L96.03,391.85 L96.33,391.87 L96.63,391.90 L96.93,391.92 L97.23,391.95 L97.52,391.98 L97.82,392.01 L98.12,392.04 L98.42,392.08 L98.72,392.12 L99.01,392.16 L99.31,392.20 L99.61,392.24 L99.91,392.29 L100.21,392.33 L100.50,392.38 L100.80,392.44 L101.10,392.49 L101.40,392.54 L101.69,392.60 L101.99,392.66 L102.29,392.72 L102.59,392.78 L102.89,392.84 L103.18,392.90 L103.48,392.96 L103.78,393.03 L104.08,393.09 L104.38,393.16 L104.67,393.22 L104.97,393.28 L105.27,393.35 L105.57,393.41 L105.87,393.47 L106.16,393.53 L106.46,393.59 L106.76,393.64 L107.06,393.70 L107.35,393.75 L107.65,393.80 L107.95,393.85 L108.25,393.89 L108.55,393.94 L108.84,393.98 L109.14,394.01 L109.44,394.05 L109.74,394.08 L110.04,394.11 L110.33,394.13 L110.63,394.15 L110.93,394.17 L111.23,394.18 L111.53,394.19 L111.82,394.20 L112.12,394.20 L112.42,394.20 L112.72,394.20 L113.01,394.19 L113.31,394.18 L113.61,394.17 L113.91,394.16 L114.21,394.14 L114.50,394.12 L114.80,394.10 L115.10,394.08 L115.40,394.05 L115.70,394.03 L115.99,394.00 L116.29,393.97 L116.59,393.94 L116.89,393.92 L117.19,393.89 L117.48,393.86 L117.78,393.84 L118.08,393.81 L118.38,393.79 L118.67,393.77 L118.97,393.75 L119.27,393.73 L119.57,393.72 L119.87,393.71 L120.16,393.70 L120.46,393.70 L120.76,393.69 L121.06,393.70 L121.36,393.70 L121.65,393.71 L121.95,393.73 L122.25,393.75 L122.55,393.77 L122.85,393.79 L123.14,393.83 L123.44,393.86 L123.74,393.90 L124.04,393.94 L124.34,393.99 L124.63,394.03 L124.93,394.09 L125.23,394.14 L125.53,394.20 L125.82,394.26 L126.12,394.32 L126.42,394.38 L126.72,394.44 L127.02,394.50 L127.31,394.56 L127.61,394.62 L127.91,394.68 L128.21,394.74 L128.51,394.79 L128.80,394.84 L129.10,394.88 L129.40,394.91 L129.70,394.94 L130.00,394.97 L130.29,394.98 L130.59,394.98 L130.89,394.98 L131.19,394.96 L131.48,394.93 L131.78,394.89 L132.08,394.83 L132.38,394.76 L132.68,394.67 L132.97,394.57 L133.27,394.44 L133.57,394.30 L133.87,394.14 L134.17,393.96 L134.46,393.75 L134.76,393.53 L135.06,393.28 L135.36,393.00 L135.66,392.70 L135.95,392.38 L136.25,392.03 L136.55,391.65 L136.85,391.24 L137.14,390.81 L137.44,390.34 L137.74,389.85 L138.04,389.33 L138.34,388.77 L138.63,388.19 L138.93,387.57 L139.23,386.93 L139.53,386.25 L139.83,385.54 L140.12,384.80 L140.42,384.02 L140.72,383.22 L141.02,382.38 L141.32,381.51 L141.61,380.61 L141.91,379.68 L142.21,378.72 L142.51,377.72 L142.80,376.70 L143.10,375.64 L143.40,374.56 L143.70,373.44 L144.00,372.30 L144.29,371.13 L144.59,369.93 L144.89,368.70 L145.19,367.45 L145.49,366.17 L145.78,364.87 L146.08,363.54 L146.38,362.18 L146.68,360.80 L146.98,359.41 L147.27,357.98 L147.57,356.54 L147.87,355.08 L148.17,353.59 L148.47,352.09 L148.76,350.57 L149.06,349.04 L149.36,347.48 L149.66,345.91 L149.95,344.33 L150.25,342.73 L150.55,341.12 L150.85,339.49 L151.15,337.85 L151.44,336.20 L151.74,334.54 L152.04,332.87 L152.34,331.18 L152.64,329.49 L152.93,327.79 L153.23,326.08 L153.53,324.37 L153.83,322.64 L154.13,320.91 L154.42,319.17 L154.72,317.43 L155.02,315.68 L155.32,313.93 L155.61,312.17 L155.91,310.40 L156.21,308.63 L156.51,306.86 L156.81,305.09 L157.10,303.31 L157.40,301.52 L157.70,299.74 L158.00,297.95 L158.30,296.15 L158.59,294.36 L158.89,292.56 L159.19,290.76 L159.49,288.96 L159.79,287.16 L160.08,285.35 L160.38,283.54 L160.68,281.73 L160.98,279.92 L161.27,278.11 L161.57,276.30 L161.87,274.49 L162.17,272.67 L162.47,270.86 L162.76,269.04 L163.06,267.23 L163.36,265.41 L163.66,263.60 L163.96,261.78 L164.25,259.97 L164.55,258.16 L164.85,256.34 L165.15,254.53 L165.45,252.73 L165.74,250.92 L166.04,249.12 L166.34,247.32 L166.64,245.52 L166.93,243.73 L167.23,241.94 L167.53,240.15 L167.83,238.37 L168.13,236.59 L168.42,234.82 L168.72,233.06 L169.02,231.30 L169.32,229.55 L169.62,227.81 L169.91,226.08 L170.21,224.35 L170.51,222.64 L170.81,220.93 L171.11,219.23 L171.40,217.55 L171.70,215.87 L172.00,214.21 L172.30,212.56 L172.59,210.92 L172.89,209.29 L173.19,207.68 L173.49,206.08 L173.79,204.50 L174.08,202.93 L174.38,201.38 L174.68,199.84 L174.98,198.32 L175.28,196.82 L175.57,195.33 L175.87,193.86 L176.17,192.41 L176.47,190.98 L176.77,189.57 L177.06,188.18 L177.36,186.80 L177.66,185.45 L177.96,184.12 L178.25,182.80 L178.55,181.51 L178.85,180.24 L179.15,178.99 L179.45,177.76 L179.74,176.55 L180.04,175.37 L180.34,174.21 L180.64,173.07 L180.94,171.95 L181.23,170.85 L181.53,169.78 L181.83,168.73 L182.13,167.71 L182.43,166.71 L182.72,165.73 L183.02,164.77 L183.32,163.84 L183.62,162.93 L183.92,162.05 L184.21,161.19 L184.51,160.36 L184.81,159.55 L185.11,158.76 L185.40,158.00 L185.70,157.26 L186.00,156.55 L186.30,155.86 L186.60,155.20 L186.89,154.56 L187.19,153.95 L187.49,153.36 L187.79,152.80 L188.09,152.26 L188.38,151.75 L188.68,151.27 L188.98,150.81 L189.28,150.38 L189.58,149.97 L189.87,149.59 L190.17,149.23 L190.47,148.91 L190.77,148.61 L191.06,148.33 L191.36,148.09 L191.66,147.87 L191.96,147.67 L192.26,147.51 L192.55,147.37 L192.85,147.26 L193.15,147.18 L193.45,147.13 L193.75,147.10 L194.04,147.10 L194.34,147.13 L194.64,147.19 L194.94,147.28 L195.24,147.40 L195.53,147.55 L195.83,147.72 L196.13,147.92 L196.43,148.16 L196.72,148.42 L197.02,148.71 L197.32,149.03 L197.62,149.38 L197.92,149.75 L198.21,150.16 L198.51,150.60 L198.81,151.06 L199.11,151.56 L199.41,152.08 L199.70,152.63 L200.00,153.21 L200.30,153.82 L200.60,154.46 L200.90,155.12 L201.19,155.82 L201.49,156.54 L201.79,157.29 L202.09,158.07 L202.38,158.88 L202.68,159.71 L202.98,160.58 L203.28,161.47 L203.58,162.38 L203.87,163.32 L204.17,164.29 L204.47,165.29 L204.77,166.31 L205.07,167.36 L205.36,168.44 L205.66,169.53 L205.96,170.66 L206.26,171.81 L206.56,172.98 L206.85,174.18 L207.15,175.41 L207.45,176.66 L207.75,177.93 L208.05,179.22 L208.34,180.54 L208.64,181.88 L208.94,183.25 L209.24,184.64 L209.53,186.05 L209.83,187.48 L210.13,188.93 L210.43,190.41 L210.73,191.91 L211.02,193.43 L211.32,194.97 L211.62,196.53 L211.92,198.11 L212.22,199.72 L212.51,201.34 L212.81,202.98 L213.11,204.64 L213.41,206.33 L213.71,208.03 L214.00,209.75 L214.30,211.49 L214.60,213.24 L214.90,215.02 L215.19,216.81 L215.49,218.62 L215.79,220.44 L216.09,222.28 L216.39,224.14 L216.68,226.01 L216.98,227.90 L217.28,229.80 L217.58,231.72 L217.88,233.65 L218.17,235.59 L218.47,237.54 L218.77,239.51 L219.07,241.49 L219.37,243.47 L219.66,245.47 L219.96,247.47 L220.26,249.49 L220.56,251.51 L220.85,253.53 L221.15,255.56 L221.45,257.60 L221.75,259.64 L222.05,261.68 L222.34,263.72 L222.64,265.76 L222.94,267.81 L223.24,269.85 L223.54,271.88 L223.83,273.92 L224.13,275.95 L224.43,277.97 L224.73,279.98 L225.03,281.99 L225.32,283.99 L225.62,285.97 L225.92,287.95 L226.22,289.91 L226.51,291.85 L226.81,293.78 L227.11,295.70 L227.41,297.59 L227.71,299.47 L228.00,301.32 L228.30,303.15 L228.60,304.96 L228.90,306.75 L229.20,308.51 L229.49,310.25 L229.79,311.95 L230.09,313.63 L230.39,315.28 L230.69,316.90 L230.98,318.49 L231.28,320.05 L231.58,321.57 L231.88,323.06 L232.17,324.52 L232.47,325.94 L232.77,327.32 L233.07,328.67 L233.37,329.99 L233.66,331.26 L233.96,332.50 L234.26,333.71 L234.56,334.87 L234.86,336.00 L235.15,337.09 L235.45,338.14 L235.75,339.15 L236.05,340.13 L236.35,341.07 L236.64,341.97 L236.94,342.83 L237.24,343.66 L237.54,344.45 L237.83,345.20 L238.13,345.92 L238.43,346.61 L238.73,347.26 L239.03,347.88 L239.32,348.46 L239.62,349.01 L239.92,349.53 L240.22,350.02 L240.52,350.48 L240.81,350.91 L241.11,351.32 L241.41,351.70 L241.71,352.05 L242.01,352.38 L242.30,352.68 L242.60,352.96 L242.90,353.22 L243.20,353.46 L243.50,353.68 L243.79,353.88 L244.09,354.07 L244.39,354.24 L244.69,354.39 L244.98,354.53 L245.28,354.66 L245.58,354.78 L245.88,354.88 L246.18,354.98 L246.47,355.06 L246.77,355.14 L247.07,355.21 L247.37,355.28 L247.67,355.34 L247.96,355.40 L248.26,355.45 L248.56,355.50 L248.86,355.55 L249.16,355.59 L249.45,355.64 L249.75,355.68 L250.05,355.73 L250.35,355.77 L250.64,355.82 L250.94,355.87 L251.24,355.92 L251.54,355.97 L251.84,356.03 L252.13,356.08 L252.43,356.15 L252.73,356.21 L253.03,356.28 L253.33,356.35 L253.62,356.42 L253.92,356.50 L254.22,356.58 L254.52,356.67 L254.82,356.75 L255.11,356.84 L255.41,356.94 L255.71,357.04 L256.01,357.14 L256.30,357.24 L256.60,357.34 L256.90,357.45 L257.20,357.56 L257.50,357.67 L257.79,357.79 L258.09,357.90 L258.39,358.02 L258.69,358.13 L258.99,358.25 L259.28,358.37 L259.58,358.49 L259.88,358.60 L260.18,358.72 L260.48,358.84 L260.77,358.96 L261.07,359.07 L261.37,359.19 L261.67,359.30 L261.96,359.41 L262.26,359.52 L262.56,359.63 L262.86,359.74 L263.16,359.84 L263.45,359.94 L263.75,360.05 L264.05,360.14 L264.35,360.24 L264.65,360.34 L264.94,360.43 L265.24,360.52 L265.54,360.61 L265.84,360.70 L266.14,360.78 L266.43,360.87 L266.73,360.95 L267.03,361.03 L267.33,361.11 L267.62,361.18 L267.92,361.26 L268.22,361.34 L268.52,361.41 L268.82,361.48 L269.11,361.56 L269.41,361.63 L269.71,361.70 L270.01,361.78 L270.31,361.85 L270.60,361.92 L270.90,362.00 L271.20,362.07 L271.50,362.14 L271.80,362.22 L272.09,362.30 L272.39,362.38 L272.69,362.46 L272.99,362.54 L273.29,362.62 L273.58,362.70 L273.88,362.79 L274.18,362.88 L274.48,362.97 L274.77,363.06 L275.07,363.16 L275.37,363.25 L275.67,363.35 L275.97,363.45 L276.26,363.55 L276.56,363.66 L276.86,363.77 L277.16,363.88 L277.46,363.99 L277.75,364.10 L278.05,364.22 L278.35,364.33 L278.65,364.45 L278.95,364.57 L279.24,364.69 L279.54,364.82 L279.84,364.94 L280.14,365.07 L280.43,365.20 L280.73,365.33 L281.03,365.45 L281.33,365.58 L281.63,365.72 L281.92,365.85 L282.22,365.98 L282.52,366.11 L282.82,366.24 L283.12,366.37 L283.41,366.50 L283.71,366.64 L284.01,366.77 L284.31,366.90 L284.61,367.03 L284.90,367.16 L285.20,367.28 L285.50,367.41 L285.80,367.54 L286.09,367.66 L286.39,367.79 L286.69,367.91 L286.99,368.03 L287.29,368.15 L287.58,368.27 L287.88,368.39 L288.18,368.50 L288.48,368.62 L288.78,368.73 L289.07,368.85 L289.37,368.96 L289.67,369.07 L289.97,369.17 L290.27,369.28 L290.56,369.39 L290.86,369.49 L291.16,369.60 L291.46,369.70 L291.75,369.80 L292.05,369.90 L292.35,370.01 L292.65,370.11 L292.95,370.20 L293.24,370.30 L293.54,370.40 L293.84,370.50 L294.14,370.60 L294.44,370.70 L294.73,370.79 L295.03,370.89 L295.33,370.99 L295.63,371.09 L295.93,371.18 L296.22,371.28 L296.52,371.38 L296.82,371.48 L297.12,371.58 L297.42,371.68 L297.71,371.77 L298.01,371.88 L298.31,371.98 L298.61,372.08 L298.90,372.18 L299.20,372.28 L299.50,372.38 L299.80,372.49 L300.10,372.59 L300.39,372.70 L300.69,372.80 L300.99,372.91 L301.29,373.02 L301.59,373.12 L301.88,373.23 L302.18,373.34 L302.48,373.45 L302.78,373.56 L303.08,373.67 L303.37,373.78 L303.67,373.89 L303.97,374.00 L304.27,374.11 L304.56,374.22 L304.86,374.33 L305.16,374.44 L305.46,374.55 L305.76,374.66 L306.05,374.77 L306.35,374.88 L306.65,374.99 L306.95,375.10 L307.25,375.21 L307.54,375.32 L307.84,375.43 L308.14,375.54 L308.44,375.65 L308.74,375.75 L309.03,375.86 L309.33,375.97 L309.63,376.07 L309.93,376.18 L310.22,376.28 L310.52,376.38 L310.82,376.49 L311.12,376.59 L311.42,376.69 L311.71,376.79 L312.01,376.89 L312.31,376.99 L312.61,377.09 L312.91,377.19 L313.20,377.29 L313.50,377.38 L313.80,377.48 L314.10,377.58 L314.40,377.67 L314.69,377.77 L314.99,377.86 L315.29,377.95 L315.59,378.05 L315.88,378.14 L316.18,378.23 L316.48,378.33 L316.78,378.42 L317.08,378.51 L317.37,378.60 L317.67,378.69 L317.97,378.78 L318.27,378.87 L318.57,378.96 L318.86,379.05 L319.16,379.14 L319.46,379.23 L319.76,379.32 L320.06,379.41 L320.35,379.50 L320.65,379.58 L320.95,379.67 L321.25,379.76 L321.54,379.85 L321.84,379.93 L322.14,380.02 L322.44,380.11 L322.74,380.20 L323.03,380.28 L323.33,380.37 L323.63,380.45 L323.93,380.54 L324.23,380.63 L324.52,380.71 L324.82,380.80 L325.12,380.88 L325.42,380.96 L325.72,381.05 L326.01,381.13 L326.31,381.22 L326.61,381.30 L326.91,381.38 L327.20,381.46 L327.50,381.54 L327.80,381.63 L328.10,381.71 L328.40,381.79 L328.69,381.87 L328.99,381.95 L329.29,382.03 L329.59,382.10 L329.89,382.18 L330.18,382.26" fill="none" stroke="#f36262" stroke-width="1.25"/>
<rect x="42.90" y="321.54" width="3.1" height="3.1" fill="#2b72ee"/>
<rect x="54.82" y="324.53" width="3.1" height="3.1" fill="#2b72ee"/>
<rect x="66.73" y="326.92" width="3.1" height="3.1" fill="#2b72ee"/>
<rect x="78.65" y="329.12" width="3.1" height="3.1" fill="#2b72ee"/>
<rect x="90.56" y="330.91" width="3.1" height="3.1" fill="#2b72ee"/>
<rect x="102.48" y="332.31" width="3.1" height="3.1" fill="#2b72ee"/>
<rect x="114.40" y="333.30" width="3.1" height="3.1" fill="#2b72ee"/>
<rect x="126.31" y="333.90" width="3.1" height="3.1" fill="#2b72ee"/>
<rect x="138.23" y="332.31" width="3.1" height="3.1" fill="#2b72ee"/>
<rect x="150.14" y="322.14" width="3.1" height="3.1" fill="#2b72ee"/>
<rect x="162.06" y="310.17" width="3.1" height="3.1" fill="#2b72ee"/>
<rect x="173.98" y="301.00" width="3.1" height="3.1" fill="#2b72ee"/>
<rect x="185.89" y="295.02" width="3.1" height="3.1" fill="#2b72ee"/>
<rect x="197.81" y="292.03" width="3.1" height="3.1" fill="#2b72ee"/>
<rect x="209.72" y="291.03" width="3.1" height="3.1" fill="#2b72ee"/>
<rect x="221.64" y="291.43" width="3.1" height="3.1" fill="#2b72ee"/>
<rect x="233.56" y="292.63" width="3.1" height="3.1" fill="#2b72ee"/>
<rect x="245.47" y="294.62" width="3.1" height="3.1" fill="#2b72ee"/>
<rect x="257.39" y="297.61" width="3.1" height="3.1" fill="#2b72ee"/>
<rect x="269.30" y="301.40" width="3.1" height="3.1" fill="#2b72ee"/>
<rect x="281.22" y="305.59" width="3.1" height="3.1" fill="#2b72ee"/>
<rect x="293.14" y="309.97" width="3.1" height="3.1" fill="#2b72ee"/>
<rect x="305.05" y="314.16" width="3.1" height="3.1" fill="#2b72ee"/>
<rect x="316.97" y="318.15" width="3.1" height="3.1" fill="#2b72ee"/>
<rect x="328.88" y="321.54" width="3.1" height="3.1" fill="#2b72ee"/>
<circle cx="44.20" cy="382.26" r="1.7" fill="#8a1010"/>
<circle cx="56.12" cy="385.25" r="1.7" fill="#8a1010"/>
<circle cx="68.03" cy="387.64" r="1.7" fill="#8a1010"/>
<circle cx="79.95" cy="389.84" r="1.7" fill="#8a1010"/>
<circle cx="91.86" cy="391.63" r="1.7" fill="#8a1010"/>
<circle cx="103.78" cy="393.03" r="1.7" fill="#8a1010"/>
<circle cx="115.70" cy="394.03" r="1.7" fill="#8a1010"/>
<circle cx="127.61" cy="394.62" r="1.7" fill="#8a1010"/>
<circle cx="139.53" cy="386.25" r="1.7" fill="#8a1010"/>
<circle cx="151.44" cy="336.20" r="1.7" fill="#8a1010"/>
<circle cx="163.36" cy="265.41" r="1.7" fill="#8a1010"/>
<circle cx="175.28" cy="196.82" r="1.7" fill="#8a1010"/>
<circle cx="187.19" cy="153.95" r="1.7" fill="#8a1010"/>
<circle cx="199.11" cy="151.56" r="1.7" fill="#8a1010"/>
<circle cx="211.02" cy="193.43" r="1.7" fill="#8a1010"/>
<circle cx="222.94" cy="267.81" r="1.7" fill="#8a1010"/>
<circle cx="234.86" cy="336.00" r="1.7" fill="#8a1010"/>
<circle cx="246.77" cy="355.14" r="1.7" fill="#8a1010"/>
<circle cx="258.69" cy="358.13" r="1.7" fill="#8a1010"/>
<circle cx="270.60" cy="361.92" r="1.7" fill="#8a1010"/>
<circle cx="282.52" cy="366.11" r="1.7" fill="#8a1010"/>
<circle cx="294.44" cy="370.70" r="1.7" fill="#8a1010"/>
<circle cx="306.35" cy="374.88" r="1.7" fill="#8a1010"/>
<circle cx="318.27" cy="378.87" r="1.7" fill="#8a1010"/>
<circle cx="330.18" cy="382.26" r="1.7" fill="#8a1010"/>
<rect x="70.5" y="460" width="251" height="24" fill="none" stroke="#555" stroke-width="1"/>
<line x1="76.2" y1="466" x2="89.6" y2="466" stroke="#6fdc6f" stroke-width="1"/>
<line x1="76.2" y1="474.2" x2="89.6" y2="474.2" stroke="#f04a4a" stroke-width="1"/>
<rect x="161.5" y="464.5" width="3" height="3" fill="#2f7fe0"/>
<circle cx="231" cy="466" r="1.5" fill="#8a1010"/>
</svg>
<div class="t lg" style="left:92.5px;top:462.8px">Synthetic</div>
<div class="t lg" style="left:92.5px;top:470.8px">Synthetic (SolRad)</div>
<div class="t lg" style="left:173px;top:462.8px">Regular Points</div>
<div class="t lg" style="left:241px;top:462.8px">Regular Points (SolRad)</div>
<div class="abs" id="gridbg"></div>
<div class="abs" id="grid">
<div class="hdr"><div class="h" style="left:0px;width:33px;padding-left:4.5px"><span class="tx">Time</span></div><div class="h" style="left:33px;width:44px;padding-left:4.5px"><span class="tx">TimeInfo</span></div><div class="h" style="left:77px;width:35px;padding-left:4.5px"><span class="tx">Index</span></div><div class="h" style="left:112px;width:36px;padding-left:4.5px"><span class="tx">Value</span></div><div class="h" style="left:148px;width:40px;padding-left:3.5px"><span class="tx">GlobStr</span></div><div class="h" style="left:188px;width:38px;padding-left:4.5px"><span class="tx">StraLu</span></div></div>
<div class="row" style="top:12.50px"><div class="c sel" style="left:0px;width:33px"><span class="tx">0</span></div><div class="c" style="left:33px;width:44px"><span class="tx">00:00:00</span></div><div class="c" style="left:77px;width:35px"><span class="tx">0</span></div><div class="c" style="left:112px;width:36px"><span class="tx">-1,35</span></div><div class="c yl" style="left:148px;width:40px"><span class="tx">0</span></div><div class="c" style="left:188px;width:38px"><span class="tx">-4,32</span></div></div>
<div class="row" style="top:25.74px"><div class="c" style="left:0px;width:33px"><span class="tx">3600</span></div><div class="c" style="left:33px;width:44px"><span class="tx">01:00:00</span></div><div class="c" style="left:77px;width:35px"><span class="tx">1</span></div><div class="c" style="left:112px;width:36px"><span class="tx">-1,5</span></div><div class="c yl" style="left:148px;width:40px"><span class="tx">0</span></div><div class="c" style="left:188px;width:38px"><span class="tx">-4,47</span></div></div>
<div class="row" style="top:38.98px"><div class="c" style="left:0px;width:33px"><span class="tx">7200</span></div><div class="c" style="left:33px;width:44px"><span class="tx">02:00:00</span></div><div class="c" style="left:77px;width:35px"><span class="tx">2</span></div><div class="c" style="left:112px;width:36px"><span class="tx">-1,62</span></div><div class="c yl" style="left:148px;width:40px"><span class="tx">0</span></div><div class="c" style="left:188px;width:38px"><span class="tx">-4,59</span></div></div>
<div class="row" style="top:52.22px"><div class="c" style="left:0px;width:33px"><span class="tx">10800</span></div><div class="c" style="left:33px;width:44px"><span class="tx">03:00:00</span></div><div class="c" style="left:77px;width:35px"><span class="tx">3</span></div><div class="c" style="left:112px;width:36px"><span class="tx">-1,73</span></div><div class="c yl" style="left:148px;width:40px"><span class="tx">0</span></div><div class="c" style="left:188px;width:38px"><span class="tx">-4,7</span></div></div>
<div class="row" style="top:65.46px"><div class="c" style="left:0px;width:33px"><span class="tx">14400</span></div><div class="c" style="left:33px;width:44px"><span class="tx">04:00:00</span></div><div class="c" style="left:77px;width:35px"><span class="tx">4</span></div><div class="c" style="left:112px;width:36px"><span class="tx">-1,82</span></div><div class="c yl" style="left:148px;width:40px"><span class="tx">0</span></div><div class="c" style="left:188px;width:38px"><span class="tx">-4,79</span></div></div>
<div class="row" style="top:78.70px"><div class="c" style="left:0px;width:33px"><span class="tx">18000</span></div><div class="c" style="left:33px;width:44px"><span class="tx">05:00:00</span></div><div class="c" style="left:77px;width:35px"><span class="tx">5</span></div><div class="c" style="left:112px;width:36px"><span class="tx">-1,89</span></div><div class="c yl" style="left:148px;width:40px"><span class="tx">0</span></div><div class="c" style="left:188px;width:38px"><span class="tx">-4,86</span></div></div>
<div class="row" style="top:91.94px"><div class="c" style="left:0px;width:33px"><span class="tx">21600</span></div><div class="c" style="left:33px;width:44px"><span class="tx">06:00:00</span></div><div class="c" style="left:77px;width:35px"><span class="tx">6</span></div><div class="c" style="left:112px;width:36px"><span class="tx">-1,94</span></div><div class="c yl" style="left:148px;width:40px"><span class="tx">0</span></div><div class="c" style="left:188px;width:38px"><span class="tx">-4,91</span></div></div>
<div class="row" style="top:105.18px"><div class="c" style="left:0px;width:33px"><span class="tx">25200</span></div><div class="c" style="left:33px;width:44px"><span class="tx">07:00:00</span></div><div class="c" style="left:77px;width:35px"><span class="tx">7</span></div><div class="c" style="left:112px;width:36px"><span class="tx">-1,97</span></div><div class="c yl" style="left:148px;width:40px"><span class="tx">9</span></div><div class="c" style="left:188px;width:38px"><span class="tx">-4,94</span></div></div>
<div class="row" style="top:118.42px"><div class="c" style="left:0px;width:33px"><span class="tx">28800</span></div><div class="c" style="left:33px;width:44px"><span class="tx">08:00:00</span></div><div class="c" style="left:77px;width:35px"><span class="tx">8</span></div><div class="c" style="left:112px;width:36px"><span class="tx">-1,89</span></div><div class="c yl" style="left:148px;width:40px"><span class="tx">62,4</span></div><div class="c" style="left:188px;width:38px"><span class="tx">-4,52</span></div></div>
<div class="row" style="top:131.66px"><div class="c" style="left:0px;width:33px"><span class="tx">32400</span></div><div class="c" style="left:33px;width:44px"><span class="tx">09:00:00</span></div><div class="c" style="left:77px;width:35px"><span class="tx">9</span></div><div class="c" style="left:112px;width:36px"><span class="tx">-1,38</span></div><div class="c yl" style="left:148px;width:40px"><span class="tx">141,6</span></div><div class="c" style="left:188px;width:38px"><span class="tx">-2,01</span></div></div>
<div class="row" style="top:144.90px"><div class="c" style="left:0px;width:33px"><span class="tx">36000</span></div><div class="c" style="left:33px;width:44px"><span class="tx">10:00:00</span></div><div class="c" style="left:77px;width:35px"><span class="tx">10</span></div><div class="c" style="left:112px;width:36px"><span class="tx">-0,78</span></div><div class="c yl" style="left:148px;width:40px"><span class="tx">222,1</span></div><div class="c" style="left:188px;width:38px"><span class="tx">1,54</span></div></div>
<div class="row" style="top:158.14px"><div class="c" style="left:0px;width:33px"><span class="tx">39600</span></div><div class="c" style="left:33px;width:44px"><span class="tx">11:00:00</span></div><div class="c" style="left:77px;width:35px"><span class="tx">11</span></div><div class="c" style="left:112px;width:36px"><span class="tx">-0,32</span></div><div class="c yl" style="left:148px;width:40px"><span class="tx">272,6</span></div><div class="c" style="left:188px;width:38px"><span class="tx">4,98</span></div></div>
<div class="row" style="top:171.38px"><div class="c" style="left:0px;width:33px"><span class="tx">43200</span></div><div class="c" style="left:33px;width:44px"><span class="tx">12:00:00</span></div><div class="c" style="left:77px;width:35px"><span class="tx">12</span></div><div class="c" style="left:112px;width:36px"><span class="tx">-0,02</span></div><div class="c yl" style="left:148px;width:40px"><span class="tx">271,7</span></div><div class="c" style="left:188px;width:38px"><span class="tx">7,13</span></div></div>
<div class="row" style="top:184.62px"><div class="c" style="left:0px;width:33px"><span class="tx">46800</span></div><div class="c" style="left:33px;width:44px"><span class="tx">13:00:00</span></div><div class="c" style="left:77px;width:35px"><span class="tx">13</span></div><div class="c" style="left:112px;width:36px"><span class="tx">0,13</span></div><div class="c yl" style="left:148px;width:40px"><span class="tx">213,3</span></div><div class="c" style="left:188px;width:38px"><span class="tx">7,25</span></div></div>
<div class="row" style="top:197.86px"><div class="c" style="left:0px;width:33px"><span class="tx">50400</span></div><div class="c" style="left:33px;width:44px"><span class="tx">14:00:00</span></div><div class="c" style="left:77px;width:35px"><span class="tx">14</span></div><div class="c" style="left:112px;width:36px"><span class="tx">0,18</span></div><div class="c yl" style="left:148px;width:40px"><span class="tx">113,1</span></div><div class="c" style="left:188px;width:38px"><span class="tx">5,15</span></div></div>
<div class="row" style="top:211.10px"><div class="c" style="left:0px;width:33px"><span class="tx">54000</span></div><div class="c" style="left:33px;width:44px"><span class="tx">15:00:00</span></div><div class="c" style="left:77px;width:35px"><span class="tx">15</span></div><div class="c" style="left:112px;width:36px"><span class="tx">0,16</span></div><div class="c yl" style="left:148px;width:40px"><span class="tx">23</span></div><div class="c" style="left:188px;width:38px"><span class="tx">1,42</span></div></div>
<div class="row" style="top:224.34px"><div class="c" style="left:0px;width:33px"><span class="tx">57600</span></div><div class="c" style="left:33px;width:44px"><span class="tx">16:00:00</span></div><div class="c" style="left:77px;width:35px"><span class="tx">16</span></div><div class="c" style="left:112px;width:36px"><span class="tx">0,1</span></div><div class="c yl" style="left:148px;width:40px"><span class="tx">0</span></div><div class="c" style="left:188px;width:38px"><span class="tx">-2</span></div></div>
<div class="row" style="top:237.58px"><div class="c" style="left:0px;width:33px"><span class="tx">61200</span></div><div class="c" style="left:33px;width:44px"><span class="tx">17:00:00</span></div><div class="c" style="left:77px;width:35px"><span class="tx">17</span></div><div class="c" style="left:112px;width:36px"><span class="tx">0</span></div><div class="c yl" style="left:148px;width:40px"><span class="tx">0</span></div><div class="c" style="left:188px;width:38px"><span class="tx">-2,96</span></div></div>
<div class="row" style="top:250.82px"><div class="c" style="left:0px;width:33px"><span class="tx">64800</span></div><div class="c" style="left:33px;width:44px"><span class="tx">18:00:00</span></div><div class="c" style="left:77px;width:35px"><span class="tx">18</span></div><div class="c" style="left:112px;width:36px"><span class="tx">-0,15</span></div><div class="c yl" style="left:148px;width:40px"><span class="tx">0</span></div><div class="c" style="left:188px;width:38px"><span class="tx">-3,11</span></div></div>
<div class="row" style="top:264.06px"><div class="c" style="left:0px;width:33px"><span class="tx">68400</span></div><div class="c" style="left:33px;width:44px"><span class="tx">19:00:00</span></div><div class="c" style="left:77px;width:35px"><span class="tx">19</span></div><div class="c" style="left:112px;width:36px"><span class="tx">-0,34</span></div><div class="c yl" style="left:148px;width:40px"><span class="tx">0</span></div><div class="c" style="left:188px;width:38px"><span class="tx">-3,3</span></div></div>
<div class="row" style="top:277.30px"><div class="c" style="left:0px;width:33px"><span class="tx">72000</span></div><div class="c" style="left:33px;width:44px"><span class="tx">20:00:00</span></div><div class="c" style="left:77px;width:35px"><span class="tx">20</span></div><div class="c" style="left:112px;width:36px"><span class="tx">-0,55</span></div><div class="c yl" style="left:148px;width:40px"><span class="tx">0</span></div><div class="c" style="left:188px;width:38px"><span class="tx">-3,51</span></div></div>
<div class="row" style="top:290.54px"><div class="c" style="left:0px;width:33px"><span class="tx">75600</span></div><div class="c" style="left:33px;width:44px"><span class="tx">21:00:00</span></div><div class="c" style="left:77px;width:35px"><span class="tx">21</span></div><div class="c" style="left:112px;width:36px"><span class="tx">-0,77</span></div><div class="c yl" style="left:148px;width:40px"><span class="tx">0</span></div><div class="c" style="left:188px;width:38px"><span class="tx">-3,74</span></div></div>
<div class="row" style="top:303.78px"><div class="c" style="left:0px;width:33px"><span class="tx">79200</span></div><div class="c" style="left:33px;width:44px"><span class="tx">22:00:00</span></div><div class="c" style="left:77px;width:35px"><span class="tx">22</span></div><div class="c" style="left:112px;width:36px"><span class="tx">-0,98</span></div><div class="c yl" style="left:148px;width:40px"><span class="tx">0</span></div><div class="c" style="left:188px;width:38px"><span class="tx">-3,95</span></div></div>
<div class="row" style="top:317.02px"><div class="c" style="left:0px;width:33px"><span class="tx">82800</span></div><div class="c" style="left:33px;width:44px"><span class="tx">23:00:00</span></div><div class="c" style="left:77px;width:35px"><span class="tx">23</span></div><div class="c" style="left:112px;width:36px"><span class="tx">-1,18</span></div><div class="c yl" style="left:148px;width:40px"><span class="tx">0</span></div><div class="c" style="left:188px;width:38px"><span class="tx">-4,15</span></div></div>
<div class="row" style="top:330.26px"><div class="c" style="left:0px;width:33px"><span class="tx">86400</span></div><div class="c" style="left:33px;width:44px"><span class="tx">1.00:00:00</span></div><div class="c" style="left:77px;width:35px"><span class="tx">24</span></div><div class="c" style="left:112px;width:36px"><span class="tx">-1,35</span></div><div class="c yl" style="left:148px;width:40px"><span class="tx">0</span></div><div class="c" style="left:188px;width:38px"><span class="tx">-4,32</span></div></div>
</div>
</body></html>
